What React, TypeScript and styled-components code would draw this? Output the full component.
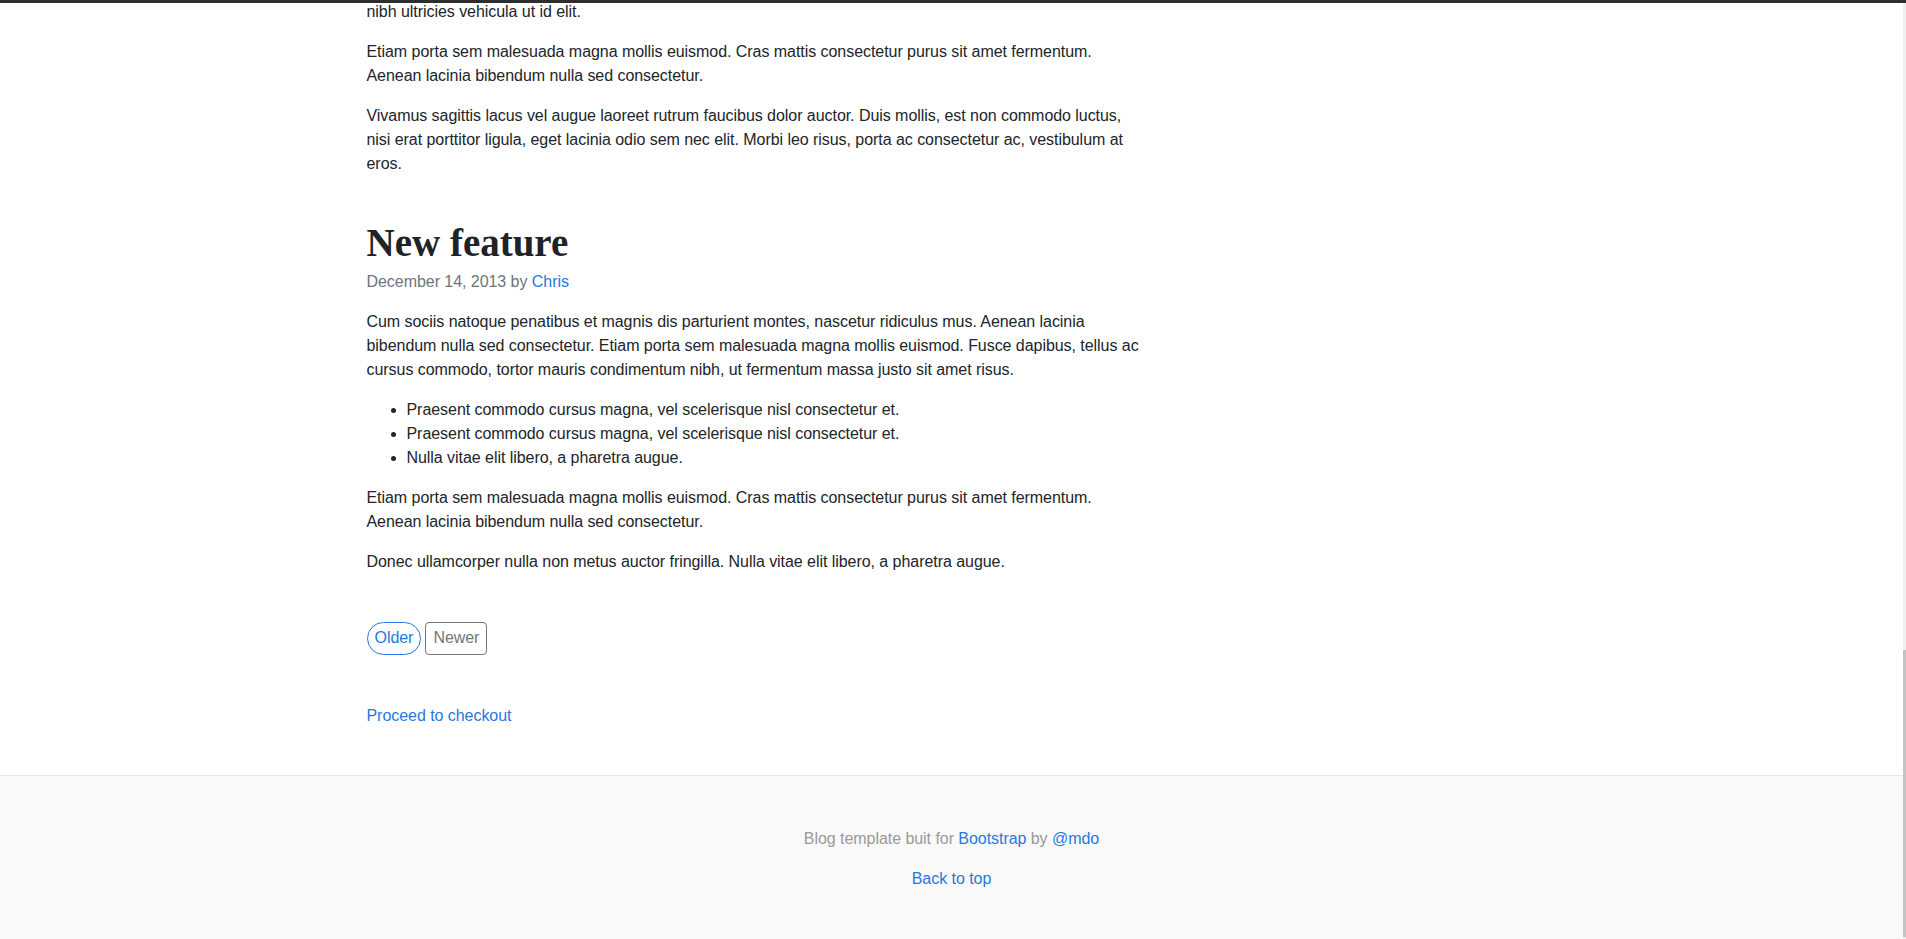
import React from "react";
import styled, { createGlobalStyle } from "styled-components";

const GlobalStyle = createGlobalStyle`
  html, body {
    margin: 0;
    height: 100%;
    overflow: hidden;
    background: #fff;
  }
  body {
    font-family: "Liberation Sans", Arial, sans-serif;
    font-size: 16px;
    line-height: 1.5;
    letter-spacing: -0.05px;
    color: #212529;
  }
  #root {
    height: 100%;
  }
`;

const BLUE = "#2778e0";

const Viewport = styled.div`
  display: flex;
  height: 100vh;
`;

const TopEdge = styled.div`
  position: fixed;
  top: 0;
  left: 0;
  right: 0;
  height: 3px;
  background: #2e2e2e;
  z-index: 10;
`;

const Page = styled.div`
  flex: 1;
  min-width: 0;
  display: flex;
  flex-direction: column;
`;

const Container = styled.main`
  width: 100%;
  max-width: 1170px;
  margin: 0 auto;
`;

const Column = styled.div`
  width: 778px;
`;

const Post = styled.article`
  margin-bottom: 48px;
`;

const Paragraph = styled.p`
  margin: 0 0 16px;
`;

const PostTitle = styled.h2`
  margin: 0 0 8.5px;
  font-family: "Liberation Serif", Georgia, serif;
  font-size: 39px;
  font-weight: 700;
  line-height: 37px;
  letter-spacing: 0;
  color: #1f2327;
`;

const PostMeta = styled.p`
  margin: 0 0 16px;
  color: #6c757d;
`;

const List = styled.ul`
  margin: 0 0 16px;
  padding-left: 40px;
`;

const Link = styled.a`
  color: ${BLUE};
  text-decoration: none;
`;

const Pagination = styled.nav`
  display: flex;
  gap: 4px;
  margin-bottom: 49px;
`;

const PageButton = styled.a<{ $variant: "primary" | "secondary" }>`
  display: inline-flex;
  align-items: center;
  box-sizing: border-box;
  height: 33px;
  padding: 0 7px;
  border: 1px solid ${(p) => (p.$variant === "primary" ? BLUE : "#767676")};
  border-radius: ${(p) => (p.$variant === "primary" ? "32px" : "4px")};
  color: ${(p) => (p.$variant === "primary" ? BLUE : "#747474")};
  text-decoration: none;
  cursor: ${(p) => (p.$variant === "primary" ? "pointer" : "default")};
`;

const Checkout = styled.div`
  margin-bottom: 47px;
`;

const Footer = styled.footer`
  flex: 1;
  padding: 51.5px 0 0;
  border-top: 1px solid #e5e5e5;
  background: #f9f9f9;
  color: #999;
  text-align: center;
`;

const FooterLine = styled.p`
  margin: 0 0 16px;
`;

const ScrollTrack = styled.div`
  width: 3px;
  display: flex;
  flex-direction: column;
  justify-content: flex-end;
  padding-bottom: 2px;
  box-sizing: border-box;
  background: #efefef;
`;

const ScrollThumb = styled.div`
  height: 287px;
  background: #c3c3c3;
`;

const bullets = [
  "Praesent commodo cursus magna, vel scelerisque nisl consectetur et.",
  "Praesent commodo cursus magna, vel scelerisque nisl consectetur et.",
  "Nulla vitae elit libero, a pharetra augue.",
];

function App(): JSX.Element {
  return (
    <>
      <GlobalStyle />
      <TopEdge />
      <Viewport>
        <Page>
          <Container>
            <Column>
              <Post>
                <Paragraph>nibh ultricies vehicula ut id elit.</Paragraph>
                <Paragraph>
                  Etiam porta sem malesuada magna mollis euismod. Cras mattis
                  consectetur purus sit amet fermentum. Aenean lacinia bibendum
                  nulla sed consectetur.
                </Paragraph>
                <Paragraph>
                  Vivamus sagittis lacus vel augue laoreet rutrum faucibus dolor
                  auctor. Duis mollis, est non commodo luctus, nisi erat
                  porttitor ligula, eget lacinia odio sem nec elit. Morbi leo
                  risus, porta ac consectetur ac, vestibulum at eros.
                </Paragraph>
              </Post>

              <Post>
                <PostTitle>New feature</PostTitle>
                <PostMeta>
                  December 14, 2013 by <Link href="#">Chris</Link>
                </PostMeta>
                <Paragraph>
                  Cum sociis natoque penatibus et magnis dis parturient montes,
                  nascetur ridiculus mus. Aenean lacinia bibendum nulla sed
                  consectetur. Etiam porta sem malesuada magna mollis euismod.
                  Fusce dapibus, tellus ac cursus commodo, tortor mauris
                  condimentum nibh, ut fermentum massa justo sit amet risus.
                </Paragraph>
                <List>
                  {bullets.map((item, index) => (
                    <li key={index}>{item}</li>
                  ))}
                </List>
                <Paragraph>
                  Etiam porta sem malesuada magna mollis euismod. Cras mattis
                  consectetur purus sit amet fermentum. Aenean lacinia bibendum
                  nulla sed consectetur.
                </Paragraph>
                <Paragraph>
                  Donec ullamcorper nulla non metus auctor fringilla. Nulla vitae
                  elit libero, a pharetra augue.
                </Paragraph>
              </Post>

              <Pagination>
                <PageButton $variant="primary" href="#">
                  Older
                </PageButton>
                <PageButton $variant="secondary">Newer</PageButton>
              </Pagination>

              <Checkout>
                <Link href="#">Proceed to checkout</Link>
              </Checkout>
            </Column>
          </Container>

          <Footer>
            <FooterLine>
              Blog template buit for <Link href="#">Bootstrap</Link> by{" "}
              <Link href="#">@mdo</Link>
            </FooterLine>
            <FooterLine>
              <Link href="#">Back to top</Link>
            </FooterLine>
          </Footer>
        </Page>
        <ScrollTrack>
          <ScrollThumb />
        </ScrollTrack>
      </Viewport>
    </>
  );
}

export default App;
